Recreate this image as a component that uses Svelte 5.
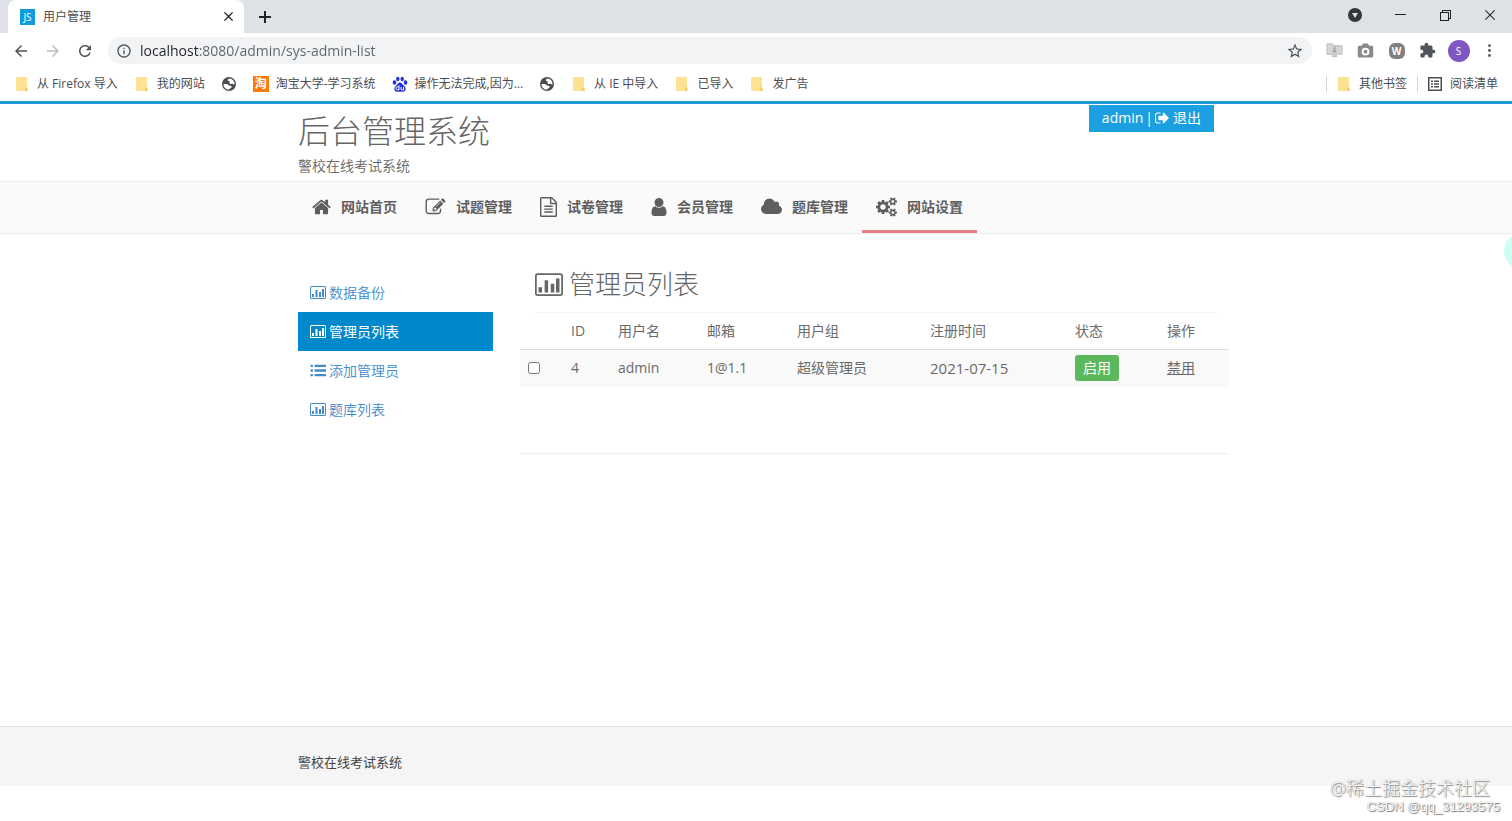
<script>
  const glyphs = {
    home: {
      box: "64 128 1664 1536",
      d: "M1472 992v480q0 26-19 45t-45 19h-384v-384h-256v384h-384q-26 0-45-19t-19-45v-480q0-1 .5-3t.5-3l575-474 575 474q1 2 1 6zm223-69l-62 74q-8 9-21 11h-3q-13 0-21-7l-692-577-692 577q-12 8-24 7-13-2-21-11l-62-74q-8-10-7-23.5t11-21.5l719-599q32-26 76-26t76 26l244 204v-195q0-14 9-23t23-9h192q14 0 23 9t9 23v408l219 182q10 8 11 21.5t-7 23.5z"
    },
    edit: {
      box: "0 0 1792 1792",
      d: "M888 1184l116-116-152-152-116 116v56h96v96h56zm440-720q-16-16-33 1l-350 350q-17 17-1 33t33-1l350-350q17-17 1-33zm80 594v190q0 119-84.5 203.5t-203.5 84.5h-832q-119 0-203.5-84.5t-84.5-203.5v-832q0-119 84.5-203.5t203.5-84.5h832q63 0 117 25 15 7 18 23 3 17-9 29l-49 49q-14 14-32 8-23-6-45-6h-832q-66 0-113 47t-47 113v832q0 66 47 113t113 47h832q66 0 113-47t47-113v-126q0-13 9-22l64-64q15-15 35-7t20 29zm-96-738l288 288-672 672h-288v-288zm444 132l-92 92-288-288 92-92q28-28 68-28t68 28l152 152q28 28 28 68t-28 68z"
    },
    file: {
      box: "128 0 1536 1792",
      d: "M1596 380q28 28 48 76t20 88v1152q0 40-28 68t-68 28h-1344q-40 0-68-28t-28-68v-1600q0-40 28-68t68-28h896q40 0 88 20t76 48zm-444-244v376h376q-10-29-22-41l-313-313q-12-12-41-22zm384 1528v-1024h-416q-40 0-68-28t-28-68v-416h-768v1536h1280zm-1024-864q0-14 9-23t23-9h704q14 0 23 9t9 23v64q0 14-9 23t-23 9h-704q-14 0-23-9t-9-23v-64zm736 224q14 0 23 9t9 23v64q0 14-9 23t-23 9h-704q-14 0-23-9t-9-23v-64q0-14 9-23t23-9h704zm0 256q14 0 23 9t9 23v64q0 14-9 23t-23 9h-704q-14 0-23-9t-9-23v-64q0-14 9-23t23-9h704z"
    },
    user: {
      box: "256 128 1280 1536",
      d: "M1536 1399q0 109-62.5 187t-150.5 78h-854q-88 0-150.5-78t-62.5-187q0-85 8.5-160.5t31.5-152 58.5-131 94-89 134.5-34.5q131 128 313 128t313-128q76 0 134.5 34.5t94 89 58.5 131 31.5 152 8.5 160.5zm-256-887q0 159-112.5 271.5t-271.5 112.5-271.5-112.5-112.5-271.5 112.5-271.5 271.5-112.5 271.5 112.5 112.5 271.5z"
    },
    cloud: {
      box: "64 128 1920 1536",
      d: "M1984 1152q0 159-112.5 271.5t-271.5 112.5h-1088q-185 0-316.5-131.5t-131.5-316.5q0-132 71-241.5t187-163.5q-2-28-2-43 0-212 150-362t362-150q158 0 286.5 88t187.5 230q70-62 166-62 106 0 181 75t75 181q0 75-41 138 129 30 213 134.5t84 239.5z"
    },
    cogs: {
      box: "0 0 1920 1792",
      d: "M896 896q0-106-75-181t-181-75-181 75-75 181 75 181 181 75 181-75 75-181zm768 512q0-52-38-90t-90-38-90 38-38 90q0 53 37.5 90.5t90.5 37.5 90.5-37.5 37.5-90.5zm0-1024q0-52-38-90t-90-38-90 38-38 90q0 53 37.5 90.5t90.5 37.5 90.5-37.5 37.5-90.5zm-384 421v185q0 10-7 19.5t-16 10.5l-155 24q-11 35-32 76 34 48 90 115 7 11 7 20 0 12-7 19-23 30-82.5 89.5t-78.5 59.5q-11 0-21-7l-115-90q-37 19-77 31-11 108-23 155-7 24-30 24h-186q-11 0-20-7.5t-10-17.5l-23-153q-34-10-75-31l-118 89q-7 7-20 7-11 0-21-8-144-133-144-160 0-9 7-19 10-14 41-53t47-61q-23-44-35-82l-152-24q-10-1-17-9.5t-7-19.5v-185q0-10 7-19.5t16-10.5l155-24q11-35 32-76-34-48-90-115-7-11-7-20 0-12 7-20 22-30 82-89t79-59q11 0 21 7l115 90q34-18 77-32 11-108 23-154 7-24 30-24h186q11 0 20 7.5t10 17.5l23 153q34 10 75 31l118-89q8-7 20-7 11 0 21 8 144 133 144 160 0 8-7 19-12 16-42 54t-45 60q23 48 34 82l152 23q10 2 17 10.5t7 19.5zm640 533v140q0 16-149 31-12 27-30 52 51 113 51 138 0 4-4 7-122 71-124 71-8 0-46-47t-52-68q-20 2-30 2t-30-2q-14 21-52 68t-46 47q-2 0-124-71-4-3-4-7 0-25 51-138-18-25-30-52-149-15-149-31v-140q0-16 149-31 13-29 30-52-51-113-51-138 0-4 4-7 4-2 35-20t59-34 30-16q8 0 46 46.5t52 67.5q20-2 30-2t30 2q51-71 92-112l6-2q4 0 124 70 4 3 4 7 0 25-51 138 17 23 30 52 149 15 149 31zm0-1024v140q0 16-149 31-12 27-30 52 51 113 51 138 0 4-4 7-122 71-124 71-8 0-46-47t-52-68q-20 2-30 2t-30-2q-14 21-52 68t-46 47q-2 0-124-71-4-3-4-7 0-25 51-138-18-25-30-52-149-15-149-31v-140q0-16 149-31 13-29 30-52-51-113-51-138 0-4 4-7 4-2 35-20t59-34 30-16q8 0 46 46.5t52 67.5q20-2 30-2t30 2q51-71 92-112l6-2q4 0 124 70 4 3 4 7 0 25-51 138 17 23 30 52 149 15 149 31z"
    },
    signOut: {
      box: "0 128 1600 1536",
      d: "M640 1440q0 4 1 20t.5 26.5-3 23.5-10 19.5-20.5 6.5h-320q-119 0-203.5-84.5t-84.5-203.5v-704q0-119 84.5-203.5t203.5-84.5h320q13 0 22.5 9.5t9.5 22.5q0 4 1 20t.5 26.5-3 23.5-10 19.5-20.5 6.5h-320q-66 0-113 47t-47 113v704q0 66 47 113t113 47h312l11.5 1 11.5 3 8 5.5 7 9 2 13.5zm928-544q0 26-19 45l-544 544q-19 19-45 19t-45-19-19-45v-288h-448q-26 0-45-19t-19-45v-384q0-26 19-45t45-19h448v-288q0-26 19-45t45-19 45 19l544 544q19 19 19 45z"
    },
    chart: {
      box: "0 0 32 26",
      d: "M3 0h26q3 0 3 3v20q0 3-3 3H3q-3 0-3-3V3q0-3 3-3zm0 2q-1 0-1 1v20q0 1 1 1h26q1 0 1-1V3q0-1-1-1zM4 16h4v6H4zM11 8h4v14h-4zM18 12h4v10h-4zM24 6h4v16h-4z"
    },
    list: {
      box: "0 0 28 22",
      d: "M1 1h4v4H1zM8 1h20v4H8zM1 9h4v4H1zM8 9h20v4H8zM1 17h4v4H1zM8 17h20v4H8z"
    },
    back: { box: "0 0 24 24", d: "M20 11H7.83l5.59-5.59L12 4l-8 8 8 8 1.41-1.41L7.83 13H20v-2z" },
    forward: { box: "0 0 24 24", d: "M4 11h12.17l-5.59-5.59L12 4l8 8-8 8-1.41-1.41L16.17 13H4v-2z" },
    reload: {
      box: "0 0 24 24",
      d: "M17.65 6.35C16.2 4.9 14.21 4 12 4c-4.42 0-7.99 3.58-7.99 8s3.57 8 7.99 8c3.73 0 6.84-2.55 7.73-6h-2.08c-.82 2.33-3.04 4-5.65 4-3.31 0-6-2.69-6-6s2.69-6 6-6c1.66 0 3.14.69 4.22 1.78L13 11h7V4l-2.35 2.35z"
    },
    info: {
      box: "0 0 24 24",
      d: "M11 17h2v-6h-2v6zm1-15C6.48 2 2 6.48 2 12s4.48 10 10 10 10-4.48 10-10S17.52 2 12 2zm0 18c-4.41 0-8-3.59-8-8s3.59-8 8-8 8 3.59 8 8-3.59 8-8 8zM11 9h2V7h-2v2z"
    },
    star: {
      box: "0 0 24 24",
      d: "M22 9.24l-7.19-.62L12 2 9.19 8.63 2 9.24l5.46 4.73L5.82 21 12 17.27 18.18 21l-1.63-7.03L22 9.24zM12 15.4l-3.76 2.27 1-4.28-3.32-2.88 4.38-.38L12 6.1l1.71 4.04 4.38.38-3.32 2.88 1 4.28L12 15.4z"
    },
    camera: {
      box: "1 1 22 20",
      d: "M9 2L7.17 5H4c-1.100 0-2 .9-2 2v11c0 1.1.9 2 2 2h16c1.100 0 2-.9 2-2V7c0-1.100-.9-2-2-2h-3.17L15 2H9zm3 15.500a5 5 0 1 1 0-10 5 5 0 0 1 0 10zm0-7.500a2.500 2.500 0 1 0 0 5 2.500 2.500 0 0 0 0-5z"
    },
    puzzle: {
      box: "0 0 24 24",
      d: "M20.5 11H19V7c0-1.1-.9-2-2-2h-4V3.5C13 2.12 11.88 1 10.5 1S8 2.12 8 3.5V5H4c-1.1 0-1.99.9-1.99 2v3.8H3.5c1.49 0 2.7 1.21 2.7 2.7s-1.21 2.7-2.7 2.7H2V20c0 1.1.9 2 2 2h3.8v-1.5c0-1.49 1.21-2.7 2.7-2.7 1.49 0 2.7 1.21 2.7 2.7V22H17c1.1 0 2-.9 2-2v-4h1.5c1.38 0 2.5-1.12 2.5-2.5S21.88 11 20.5 11z"
    },
    more: { box: "0 0 24 24", d: "M12 7a2 2 0 1 0 0-4 2 2 0 0 0 0 4zm0 3a2 2 0 1 0 0 4 2 2 0 0 0 0-4zm0 7a2 2 0 1 0 0 4 2 2 0 0 0 0-4z" },
    globe: {
      box: "0 0 16 16",
      d: "M8 1a7 7 0 1 0 0 14A7 7 0 0 0 8 1zM2.500 8.300c2-.5 4-.3 5 .7.9.9 1.800.7 2.700 1 1 .4.600 1.700-.4 2-.9.3-.8 1.300-1.800 1.600C5 13.700 2.500 11.500 2.500 8.300zM8.500 2.500c-1 .3-1.900 1-1.600 1.900.3.8 1.500.4 1.700 1.300.2 1-.5 1.500.3 2 .9.5 2.100-.2 3 .3.600.4 1 .6 1.600.2.1-3-2-5.500-5-5.700z"
    },
    reading: {
      box: "0 0 16 16",
      d: "M1 1h14v14H1zM2.500 2.500v11h11v-11zM4 4.500h2v1.500H4zM7 4.500h5v1.500H7zM4 7.250h2v1.500H4zM7 7.250h5v1.500H7zM4 10h2v1.500H4zM7 10h5v1.500H7z"
    },
    close: { box: "0 0 12 12", d: "M2 1l4 4 4-4 1 1-4 4 4 4-1 1-4-4-4 4-1-1 4-4-4-4z" },
    plus: { box: "0 0 12 12", d: "M5 0h2v5h5v2H7v5H5V7H0V5h5z" },
    search: { box: "0 0 14 14", d: "M7 0a7 7 0 1 0 0 14A7 7 0 0 0 7 0zM4 5h6l-3 5z" },
    minimize: { box: "0 0 12 12", d: "M1 5h11v1H1z" },
    restore: { box: "0 0 12 12", d: "M1 3h2V1h9v9h-2v2H1zM2 4v7h7V4zM4 2v1h6v6h1V2z" },
    exit: { box: "0 0 12 12", d: "M1.700 1L6 5.300 10.300 1l.7.7L6.700 6l4.300 4.300-.7.7L6 6.700 1.700 11l-.7-.7L5.300 6 1 1.700z" }
  };

  const bookmarks = [
    { icon: "folder", label: "从 Firefox 导入" },
    { icon: "folder", label: "我的网站" },
    { icon: "globe", label: "" },
    { icon: "tao", label: "淘宝大学-学习系统" },
    { icon: "paw", label: "操作无法完成,因为..." },
    { icon: "globe", label: "" },
    { icon: "folder", label: "从 IE 中导入" },
    { icon: "folder", label: "已导入" },
    { icon: "folder", label: "发广告" }
  ];

  const menu = [
    { icon: "home", label: "网站首页" },
    { icon: "edit", label: "试题管理" },
    { icon: "file", label: "试卷管理" },
    { icon: "user", label: "会员管理" },
    { icon: "cloud", label: "题库管理" },
    { icon: "cogs", label: "网站设置", active: true }
  ];

  const sideMenu = [
    { icon: "chart", label: "数据备份" },
    { icon: "chart", label: "管理员列表", active: true },
    { icon: "list", label: "添加管理员" },
    { icon: "chart", label: "题库列表" }
  ];

  const columns = ["ID", "用户名", "邮箱", "用户组", "注册时间", "状态", "操作"];

  let admins = $state([
    { id: 4, name: "admin", email: "1@1.1", group: "超级管理员", date: "2021-07-15", checked: false }
  ]);
  let url = $state("localhost:8080/admin/sys-admin-list");
</script>

{#snippet icon(name)}
  <svg class="icon {name}" viewBox={glyphs[name].box} aria-hidden="true">
    <path d={glyphs[name].d} fill="currentColor" fill-rule="evenodd" />
  </svg>
{/snippet}

{#snippet bookmarkIcon(name)}
  {#if name === "folder"}
    <svg class="mark" viewBox="0 0 16 16" aria-hidden="true">
      <path d="M2 1h11v10l1 1v3H2z" fill="#fde293" />
      <path d="M11 15v-3l1-1 1 1v2l1 1z" fill="#f5cf5b" />
    </svg>
  {:else if name === "tao"}
    <span class="tao">淘</span>
  {:else if name === "paw"}
    <svg class="mark" viewBox="0 0 16 16" fill="#2932e1" aria-hidden="true">
      <ellipse cx="2.500" cy="6.500" rx="1.800" ry="2.200" />
      <ellipse cx="5.800" cy="3" rx="1.700" ry="2.300" />
      <ellipse cx="10.200" cy="3" rx="1.700" ry="2.300" />
      <ellipse cx="13.500" cy="6.500" rx="1.800" ry="2.200" />
      <path d="M8 6.500c2 0 2.500 2 4 3.200 3 2.800 1.500 6-1 6-1.500 0-4.500 0-6 0-2.500 0-4-3.200-1-6C5.500 8.500 6 6.500 8 6.500z" />
      <path d="M7 9.500v4.300H5.500a1.500 1.500 0 0 1 0-3H7M9 11v2.200q0 .6.600.6H11.500V11" fill="none" stroke="#fff" />
    </svg>
  {:else}
    {@render icon(name)}
  {/if}
{/snippet}

<div class="browser">
  <div class="tabs">
    <div class="tab">
      <span class="favicon">JS</span>
      <span class="tab-title">用户管理</span>
      <button aria-label="关闭标签页">{@render icon("close")}</button>
    </div>
    <button class="new-tab" aria-label="新标签页">{@render icon("plus")}</button>
    <div class="window">
      <button aria-label="搜索标签页">{@render icon("search")}</button>
      <button aria-label="最小化">{@render icon("minimize")}</button>
      <button aria-label="还原">{@render icon("restore")}</button>
      <button aria-label="关闭">{@render icon("exit")}</button>
    </div>
  </div>

  <div class="toolbar">
    <button aria-label="后退">{@render icon("back")}</button>
    <button class="disabled" aria-label="前进" disabled>{@render icon("forward")}</button>
    <button aria-label="重新加载">{@render icon("reload")}</button>
    <div class="address">
      {@render icon("info")}
      <input type="text" aria-label="地址栏" bind:value={url} />
      <button aria-label="收藏">{@render icon("star")}</button>
    </div>
    <div class="extensions">
      <button aria-label="下载">
        <svg class="icon" viewBox="0 0 18 18" aria-hidden="true">
          <path d="M1 2h6l1 2h9v9H1z" fill="#d6d6d6" stroke="#b8b8b8" />
          <path d="M8 5h2v4h2l-3 3-3-3h2z" fill="#a2a2a2" />
          <path d="M6 14h6v2H6z" fill="#c4c4c4" />
        </svg>
      </button>
      <button class="grey" aria-label="截图">{@render icon("camera")}</button>
      <button aria-label="W"><span class="octagon">W</span></button>
      <button aria-label="扩展程序">{@render icon("puzzle")}</button>
      <button aria-label="S"><span class="avatar">S</span></button>
      <button aria-label="更多">{@render icon("more")}</button>
    </div>
  </div>

  <div class="bookmarks">
    {#each bookmarks as mark}
      <a href="#bookmark" aria-label={mark.label || "书签"}>
        {@render bookmarkIcon(mark.icon)}
        {#if mark.label}<span>{mark.label}</span>{/if}
      </a>
    {/each}
    <div class="bookmarks-end">
      <a href="#other">{@render bookmarkIcon("folder")}<span>其他书签</span></a>
      <a href="#reading">{@render icon("reading")}<span>阅读清单</span></a>
    </div>
  </div>
</div>

<div class="page">
  <header>
    <div class="container top">
      <div>
        <h1>后台管理系统</h1>
        <p>警校在线考试系统</p>
      </div>
      <div class="account">
        <a href="#admin">admin</a>
        <span>|</span>
        <a class="logout" href="#logout">{@render icon("signOut")}退出</a>
      </div>
    </div>
  </header>

  <nav class="main-nav">
    <div class="container">
      {#each menu as item}
        <a href="#menu" class:active={item.active}>
          {@render icon(item.icon)}
          <span>{item.label}</span>
        </a>
      {/each}
    </div>
  </nav>

  <div class="container content">
    <nav class="side">
      {#each sideMenu as item}
        <a href="#side" class:active={item.active}>
          {@render icon(item.icon)}
          <span>{item.label}</span>
        </a>
      {/each}
    </nav>

    <main>
      <h2>{@render icon("chart")}<span>管理员列表</span></h2>
      <table>
        <thead>
          <tr>
            <th aria-label="选择"></th>
            {#each columns as column}
              <th>{column}</th>
            {/each}
          </tr>
        </thead>
        <tbody>
          {#each admins as admin}
            <tr>
              <td><input type="checkbox" aria-label={admin.name} bind:checked={admin.checked} /></td>
              <td>{admin.id}</td>
              <td>{admin.name}</td>
              <td>{admin.email}</td>
              <td>{admin.group}</td>
              <td class="date">{admin.date}</td>
              <td><button class="enable">启用</button></td>
              <td><a href="#disable">禁用</a></td>
            </tr>
          {/each}
        </tbody>
      </table>
      <hr />
    </main>
  </div>

  <footer>
    <div class="container">警校在线考试系统</div>
  </footer>

  <div class="bubble"></div>
  <div class="watermark">
    <span class="site">@稀土掘金技术社区</span>
    <span class="author">CSDN @qq_31293575</span>
  </div>
</div>

<style>
  :global(body) {
    background: #fff;
    font-family: "Open Sans", "Noto Sans CJK SC", sans-serif;
    font-size: 14px;
    line-height: 20px;
    color: #666;
  }
  :global(#app) {
    min-height: 100vh;
    display: flex;
    flex-direction: column;
    position: relative;
    overflow: hidden;
  }
  button {
    display: flex;
    align-items: center;
    justify-content: center;
    padding: 0;
    border: 0;
    background: none;
    color: inherit;
    font: inherit;
  }
  a {
    color: inherit;
    text-decoration: none;
  }
  .icon {
    display: block;
    flex: none;
    width: 18px;
    height: 18px;
  }

  .browser {
    color: #4a4d51;
    font-size: 12px;
  }
  .tabs {
    display: flex;
    align-items: center;
    height: 33px;
    padding-left: 8px;
    background: #dee1e6;
  }
  .tab {
    display: flex;
    align-items: center;
    gap: 8px;
    box-sizing: border-box;
    width: 236px;
    height: 33px;
    padding: 0 10px 0 12px;
    border-radius: 8px 8px 0 0;
    background: #fff;
  }
  .tab-title {
    flex: 1;
  }
  .favicon {
    width: 15px;
    height: 16px;
    background: #0f9bdc;
    color: #fff;
    font-size: 10px;
    line-height: 16px;
    text-align: center;
  }
  .icon.close,
  .icon.plus,
  .icon.minimize,
  .icon.restore,
  .icon.exit {
    width: 12px;
    height: 12px;
    color: #202124;
  }
  .icon.close {
    width: 11px;
    height: 11px;
  }
  .new-tab {
    margin-left: 15px;
  }
  .window {
    display: flex;
    align-items: center;
    height: 29px;
    margin-left: auto;
    align-self: flex-start;
  }
  .window button {
    width: 45px;
    height: 29px;
  }
  .icon.search {
    width: 14px;
    height: 14px;
    color: #35363a;
  }

  .toolbar {
    display: flex;
    align-items: center;
    height: 35px;
    gap: 14px;
    padding: 0 7px 0 12px;
    color: #505357;
  }
  .toolbar .disabled {
    color: #bbbdc0;
  }
  .address {
    display: flex;
    flex: 1;
    align-items: center;
    gap: 8px;
    height: 27px;
    padding: 0 8px;
    border-radius: 14px;
    background: #f1f3f4;
  }
  .icon.info {
    width: 16px;
    height: 16px;
  }
  .address input {
    flex: 1;
    padding: 0;
    border: 0;
    outline: 0;
    background: linear-gradient(to right, #202124 59px, #5f6368 59px);
    background-clip: text;
    color: transparent;
    font: inherit;
    font-size: 14px;
  }
  .extensions {
    display: flex;
    margin-left: -7px;
  }
  .extensions button {
    width: 31px;
    height: 28px;
  }
  .extensions .icon {
    width: 17px;
    height: 17px;
  }
  .extensions .grey {
    color: #8a8a8a;
  }
  .octagon {
    width: 16px;
    height: 16px;
    border-radius: 6px;
    background: #808080;
    color: #fff;
    font-size: 10px;
    font-weight: 700;
    line-height: 16px;
  }
  .avatar {
    width: 22px;
    height: 22px;
    border-radius: 50%;
    background: #7e57c2;
    color: #fff;
    font-size: 10px;
    line-height: 22px;
  }

  .bookmarks {
    display: flex;
    align-items: center;
    gap: 16px;
    height: 31px;
    padding: 0 14px 2px;
    white-space: nowrap;
  }
  .bookmarks a {
    display: flex;
    align-items: center;
    gap: 7px;
  }
  .mark,
  .icon.globe,
  .icon.reading {
    flex: none;
    width: 16px;
    height: 16px;
  }
  .tao {
    width: 16px;
    height: 16px;
    background: #ff7a00;
    color: #fff;
    font-weight: 700;
    line-height: 16px;
    text-align: center;
  }
  .bookmarks-end {
    display: flex;
    gap: 10px;
    margin-left: auto;
  }
  .bookmarks-end a {
    padding-left: 9px;
    border-left: 1px solid #d5d7da;
    line-height: 16px;
  }

  .page {
    display: flex;
    flex: 1;
    flex-direction: column;
    padding-bottom: 35px;
    border-top: 3px solid #1f9bd3;
  }
  .container {
    box-sizing: border-box;
    width: 100%;
    max-width: 946px;
    margin: 0 auto;
    padding: 0 15px;
  }
  .top {
    display: flex;
    align-items: flex-start;
    justify-content: space-between;
    height: 77px;
  }
  h1,
  h2,
  p {
    margin: 0;
    font-weight: 300;
  }
  h1 {
    padding-top: 7px;
    font-size: 32px;
    line-height: 40px;
  }
  .top p {
    padding-top: 5px;
    font-weight: 350;
  }
  .account {
    display: flex;
    gap: 2px;
    margin-top: 1px;
    padding: 3px 13px 4px;
    background: #1c9fe0;
    color: #fff;
  }
  .logout {
    display: flex;
    align-items: center;
    gap: 4px;
  }
  .icon.signOut {
    width: 14px;
    height: 14px;
  }

  .main-nav {
    border-top: 1px solid #eaeaea;
    border-bottom: 1px solid #eaeaea;
    background: #fafafa;
  }
  .main-nav .container {
    display: flex;
  }
  .main-nav a {
    display: flex;
    align-items: center;
    gap: 10px;
    height: 46px;
    padding: 2px 14px 0;
    border-bottom: 3px solid transparent;
    color: #5e5e5e;
    font-weight: 700;
  }
  .main-nav a.active {
    border-color: #e58080;
  }
  .main-nav .icon {
    width: 21px;
    height: 20px;
  }
  .main-nav .home {
    width: 19px;
  }
  .main-nav .file {
    width: 17px;
  }
  .main-nav .user {
    width: 16px;
    height: 18px;
  }

  .content {
    display: flex;
    gap: 27px;
    padding-right: 0;
  }
  .side {
    width: 195px;
    padding-top: 39px;
    color: #428bca;
    font-weight: 350;
  }
  .side a {
    display: flex;
    align-items: center;
    gap: 3px;
    height: 39px;
    padding-left: 12px;
  }
  .side a.active {
    background: #08c;
    color: #fff;
    font-weight: 400;
  }
  .side .icon {
    width: 16px;
    height: 13px;
  }
  main {
    flex: 1;
  }
  h2 {
    display: flex;
    align-items: center;
    gap: 6px;
    height: 56px;
    margin: 0 11px 0 15px;
    padding-top: 22px;
    border-bottom: 1px solid #f3f3f3;
    font-size: 26px;
    line-height: 32px;
  }
  h2 .icon {
    width: 28px;
    height: 23px;
  }
  table {
    width: 100%;
    border-collapse: collapse;
    table-layout: fixed;
  }
  th,
  td {
    height: 20px;
    padding: 8px;
    color: #6a6a6a;
    text-align: left;
    font-weight: 400;
  }
  th {
    border-bottom: 1px solid #ddd;
  }
  td {
    height: 26px;
    padding: 5px 8px 6px;
    background: #f9f9f9;
  }
  th:nth-child(1) { width: 27px; }
  th:nth-child(2) { width: 31px; }
  th:nth-child(3) { width: 73px; }
  th:nth-child(4) { width: 74px; }
  th:nth-child(5) { width: 117px; }
  th:nth-child(6) { width: 129px; }
  th:nth-child(7) { width: 76px; }
  td input {
    display: block;
    width: 12px;
    height: 12px;
    margin: 0;
  }
  .date {
    font-size: 15px;
  }
  td a {
    text-decoration: underline;
  }
  .enable {
    height: 26px;
    padding: 0 8px;
    border-radius: 3px;
    background: #5cb85c;
    color: #fff;
  }
  hr {
    margin: 66px 0 0;
    border: 0;
    border-top: 1px solid #eee;
  }

  footer {
    margin-top: auto;
    padding: 25px 0 14px;
    border-top: 1px solid #e2e2e2;
    background: #f5f5f5;
    color: #444;
    font-size: 13px;
  }

  .bubble {
    position: absolute;
    top: 233px;
    right: -28px;
    width: 36px;
    height: 36px;
    border-radius: 50%;
    background: #ccfff3;
  }
  .watermark {
    position: absolute;
    right: 12px;
    bottom: 6px;
    display: flex;
    flex-direction: column;
    align-items: flex-end;
    color: #fff;
    text-shadow: 1px 1px 1px #777, 0 0 1px #888;
  }
  .site {
    padding-right: 10px;
    font-size: 18px;
    font-weight: 300;
    line-height: 22px;
  }
  .author {
    font-family: "Liberation Sans", sans-serif;
    font-size: 13px;
    line-height: 16px;
  }
</style>
